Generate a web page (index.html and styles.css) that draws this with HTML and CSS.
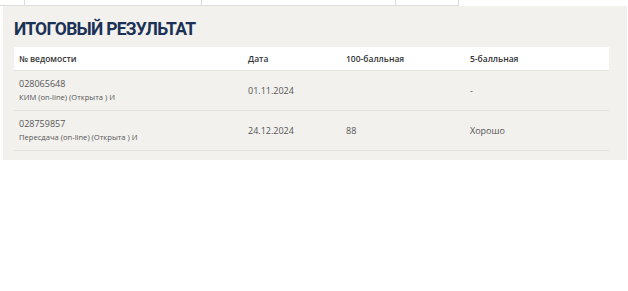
FILE: index.html
```html
<!DOCTYPE html>
<html lang="ru">
<head>
<meta charset="utf-8">
<link rel="stylesheet" href="styles.css">
</head>
<body>
<div class="tabs">
  <div class="tab t1"></div>
  <div class="tab t2"></div>
  <div class="tab t3"></div>
  <div class="tab t4"></div>
</div>
<div class="panel">
  <h2 class="title">ИТОГОВЫЙ РЕЗУЛЬТАТ</h2>
  <table class="results">
    <thead>
      <tr>
        <th class="c1">№ ведомости</th>
        <th class="c2">Дата</th>
        <th class="c3">100-балльная</th>
        <th class="c4">5-балльная</th>
      </tr>
    </thead>
    <tbody>
      <tr>
        <td><div class="num">028065648</div><div class="sub">КИМ (on-line) (Открыта ) И</div></td>
        <td>01.11.2024</td>
        <td></td>
        <td>-</td>
      </tr>
      <tr>
        <td><div class="num">028759857</div><div class="sub">Пересдача (on-line) (Открыта ) И</div></td>
        <td>24.12.2024</td>
        <td>88</td>
        <td>Хорошо</td>
      </tr>
    </tbody>
  </table>
</div>
</body>
</html>
```
FILE: styles.css
```css
html, body {
  margin: 0;
  padding: 0;
  background: #ffffff;
  font-family: "Open Sans", "Noto Sans", sans-serif;
}
.tabs {
  display: flex;
  height: 6px;
  width: 459px;
}
.tab {
  height: 5px;
  border-bottom: 1px solid #dcdcdc;
  border-right: 1px solid #dcdcdc;
}
.t1 { width: 24px; }
.t2 { width: 176px; }
.t3 { width: 193px; }
.t4 { width: 62px; }
.panel {
  margin-left: 3px;
  width: 624px;
  height: 154px;
  box-sizing: border-box;
  background: #f2f1ee;
  padding: 11px 18px 0 11px;
}
.title {
  margin: 0;
  font-family: Roboto, "Open Sans", sans-serif;
  font-size: 17.5px;
  line-height: 24px;
  font-weight: 700;
  color: #1c3156;
  letter-spacing: -0.75px;
}
.results {
  margin-top: 6px;
  width: 595px;
  border-collapse: collapse;
  table-layout: fixed;
}
.results th {
  background: #ffffff;
  height: 23px;
  padding: 0 5px;
  text-align: left;
  font-size: 8.5px;
  font-weight: 600;
  color: #333333;
  border-bottom: 1px solid #e4e3df;
}
.c1 { width: 219px; }
.c2 { width: 88px; }
.c3 { width: 114px; }
.results td {
  height: 39px;
  padding: 0 5px;
  font-size: 9px;
  color: #555555;
  border-bottom: 1px solid #e2e1dd;
  vertical-align: middle;
}
.num {
  font-size: 9px;
  line-height: 14px;
}
.sub {
  font-size: 7.6px;
  line-height: 13px;
  color: #555555;
}
```
